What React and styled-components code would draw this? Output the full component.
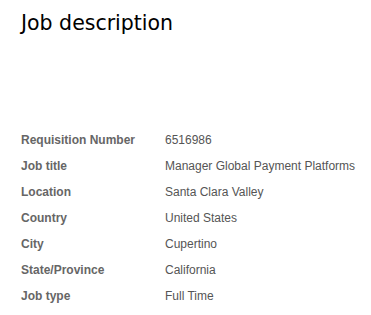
import React from "react";
import styled, { createGlobalStyle } from "styled-components";

const GlobalStyle = createGlobalStyle`
  body {
    margin: 0;
    background-color: #ffffff;
  }
`;

const Page = styled.div`
  display: flex;
  flex-direction: column;
  padding: 11px 0 0 21px;
`;

const Title = styled.h1`
  margin: 0;
  font-family: "DejaVu Sans", sans-serif;
  font-weight: 400;
  font-size: 20.5px;
  line-height: 24px;
  color: #000000;
`;

const Details = styled.div`
  display: grid;
  grid-template-columns: 144px auto;
  grid-auto-rows: 26px;
  margin-top: 92px;
  font-family: "Liberation Sans", Arial, sans-serif;
  font-size: 12px;
  line-height: 26px;
`;

const Label = styled.div`
  font-weight: 700;
  color: #666666;
  white-space: nowrap;
`;

const Value = styled.div`
  color: #555555;
  white-space: nowrap;
`;

const rows = [
  ["Requisition Number", "6516986"],
  ["Job title", "Manager Global Payment Platforms"],
  ["Location", "Santa Clara Valley"],
  ["Country", "United States"],
  ["City", "Cupertino"],
  ["State/Province", "California"],
  ["Job type", "Full Time"],
];

export default function App() {
  return (
    <>
      <GlobalStyle />
      <Page>
        <Title>Job description</Title>
        <Details>
          {rows.map(([label, value]) => (
            <React.Fragment key={label}>
              <Label>{label}</Label>
              <Value>{value}</Value>
            </React.Fragment>
          ))}
        </Details>
      </Page>
    </>
  );
}
